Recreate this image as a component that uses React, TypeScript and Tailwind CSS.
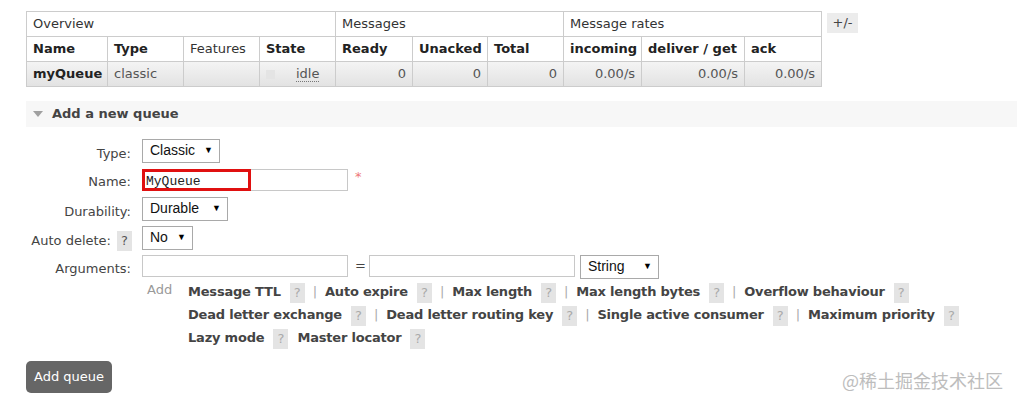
import React from "react"

const font = "font-['DejaVu_Sans',Verdana,sans-serif]"

function Help() {
  return (
    <span className="inline-block w-[15px] h-[20px] leading-[20px] align-middle text-center bg-[#e4e4e4] text-[#aaa] font-normal text-[13px] tracking-normal ml-[9px]">
      ?
    </span>
  )
}

function Sep() {
  return <span className="text-[#aaa] font-normal mx-[8px]">|</span>
}

function Select({ label, width }: { label: string; width: string }) {
  return (
    <div
      className={`${width} h-[24px] border border-[#a9a9a9] bg-white flex items-center justify-between pl-[7px] pr-[6px] font-['Liberation_Sans',Arial,sans-serif] text-[14px] text-[#111]`}
    >
      <span className="-mt-[2px]">{label}</span>
      <span className="text-[9px] text-black">▼</span>
    </div>
  )
}

export default function App() {
  const th1 = "border border-[#ccc] px-[6px] text-left font-normal text-[#333] h-[25px]"
  const th2 = "border border-[#ccc] px-[6px] text-left font-bold text-[#222] h-[25px]"
  const td = "border border-[#ccc] px-[6px] h-[25px] text-right text-[#555]"

  return (
    <div className={`${font} text-[13px] text-[#444] bg-white w-[1017px] h-[405px] relative overflow-hidden pl-[26px] pt-[11px]`}>
      {/* Queues table */}
      <div className="flex items-start">
        <table className="border-collapse table-fixed w-[796px]">
          <colgroup>
            <col className="w-[81px]" />
            <col className="w-[76px]" />
            <col className="w-[76px]" />
            <col className="w-[76px]" />
            <col className="w-[77px]" />
            <col className="w-[75px]" />
            <col className="w-[76px]" />
            <col className="w-[78px]" />
            <col className="w-[103px]" />
            <col className="w-[77px]" />
          </colgroup>
          <thead>
            <tr>
              <th colSpan={4} className={th1}>Overview</th>
              <th colSpan={3} className={th1}>Messages</th>
              <th colSpan={3} className={th1}>Message rates</th>
            </tr>
            <tr>
              <th className={th2}>Name</th>
              <th className={th2}>Type</th>
              <th className={`${th2} font-normal text-[#333]`}>Features</th>
              <th className={th2}>State</th>
              <th className={th2}>Ready</th>
              <th className={th2}>Unacked</th>
              <th className={th2}>Total</th>
              <th className={th2}>incoming</th>
              <th className={th2}>deliver / get</th>
              <th className={th2}>ack</th>
            </tr>
          </thead>
          <tbody>
            <tr className="bg-gradient-to-b from-[#f4f4f4] to-[#e2e2e2]">
              <td className="border border-[#ccc] px-[6px] h-[25px] font-bold text-[#222]">myQueue</td>
              <td className="border border-[#ccc] px-[6px] text-[#555]">classic</td>
              <td className="border border-[#ccc] px-[6px]"></td>
              <td className="border border-[#ccc] px-[6px]">
                <div className="flex items-center">
                  <span className="w-[9px] h-[9px] bg-[#e4e4e4]"></span>
                  <span className="ml-[21px] text-[#555] border-b border-dotted border-[#777] leading-[15px]">idle</span>
                </div>
              </td>
              <td className={td}>0</td>
              <td className={td}>0</td>
              <td className={td}>0</td>
              <td className={td}>0.00/s</td>
              <td className={td}>0.00/s</td>
              <td className={td}>0.00/s</td>
            </tr>
          </tbody>
        </table>
        <div className="ml-[5px] mt-[2px] w-[31px] h-[20px] bg-[#ececec] text-[#444] text-center leading-[20px]">+/-</div>
      </div>

      {/* Add a new queue */}
      <div className="mt-[14px] h-[26px] bg-[#f7f7f7] flex items-center -mr-[26px]">
        <svg width="10" height="6" viewBox="0 0 10 6" className="ml-[7px]">
          <path d="M0 0 L10 0 L5 6 Z" fill="#a0a0a0" />
        </svg>
        <span className="ml-[9px] font-bold text-[13px] text-[#444]">Add a new queue</span>
      </div>

      <div className="flex flex-col">
        <div className="mt-[12px] h-[24px] flex items-center">
          <div className="w-[106px] text-right pr-[1px] pt-[6px]">Type:</div>
          <div className="ml-[10px]"><Select label="Classic" width="w-[78px]" /></div>
        </div>

        <div className="mt-[6px] h-[22px] flex items-center">
          <div className="w-[106px] text-right pr-[1px] pt-[4px]">Name:</div>
          <div className="ml-[10px] relative w-[206px] h-[22px] border border-[#c8c8c8] bg-white">
            <span className="absolute left-[3px] top-[2px] font-['Liberation_Mono','Courier_New',monospace] text-[13px] text-[#222]">MyQueue</span>
            <div className="absolute -left-[1px] -top-[1px] w-[109px] h-[22px] border-[3px] border-[#e01010]"></div>
          </div>
          <span className="ml-[7px] text-[#e77] text-[13px] -mt-[6px]">*</span>
        </div>

        <div className="mt-[6px] h-[24px] flex items-center">
          <div className="w-[106px] text-right pr-[1px] pt-[6px]">Durability:</div>
          <div className="ml-[10px]"><Select label="Durable" width="w-[86px]" /></div>
        </div>

        <div className="mt-[5px] h-[24px] flex items-center">
          <div className="w-[106px] flex justify-end items-center">
            <span className="pt-[6px]">Auto delete:</span>
            <span className="inline-block w-[15px] h-[20px] leading-[20px] text-center bg-[#e4e4e4] text-[#555] ml-[6px] mt-[5px]">?</span>
          </div>
          <div className="ml-[10px]"><Select label="No" width="w-[51px]" /></div>
        </div>

        <div className="mt-[5px] h-[22px] flex items-center">
          <div className="w-[106px] text-right pr-[1px] pt-[6px]">Arguments:</div>
          <div className="ml-[10px] w-[206px] h-[22px] border border-[#c8c8c8] bg-white"></div>
          <span className="ml-[7px] text-[#444]">=</span>
          <div className="ml-[3px] w-[206px] h-[22px] border border-[#c8c8c8] bg-white"></div>
          <div className="ml-[5px] mt-[2px]"><Select label="String" width="w-[79px]" /></div>
        </div>

        <div className="mt-[3px] flex">
          <div className="w-[121px] shrink-0"></div>
          <div className="w-[41px] shrink-0 text-[#999] leading-[20px]">Add</div>
          <div className="w-[820px] font-bold text-[#444] leading-[23px] tracking-[-0.2px]">
            <div>
              Message TTL<Help /><Sep />Auto expire<Help /><Sep />Max length<Help /><Sep />Max length bytes<Help /><Sep />Overflow behaviour<Help />
            </div>
            <div>
              Dead letter exchange<Help /><Sep />Dead letter routing key<Help /><Sep />Single active consumer<Help /><Sep />Maximum priority<Help />
            </div>
            <div>
              Lazy mode<Help /><span className="ml-[9px]">Master locator</span><Help />
            </div>
          </div>
        </div>

        <div className="mt-[12px]">
          <button className="w-[86px] h-[32px] rounded-[5px] bg-[#666] text-white font-['DejaVu_Sans',Verdana,sans-serif] text-[13px]">
            Add queue
          </button>
        </div>
      </div>

      <div className="absolute left-[842px] top-[367px] text-[18px] text-[#bdbdbd] font-['Noto_Sans_CJK_SC',sans-serif]">
        @稀土掘金技术社区
      </div>
    </div>
  )
}
